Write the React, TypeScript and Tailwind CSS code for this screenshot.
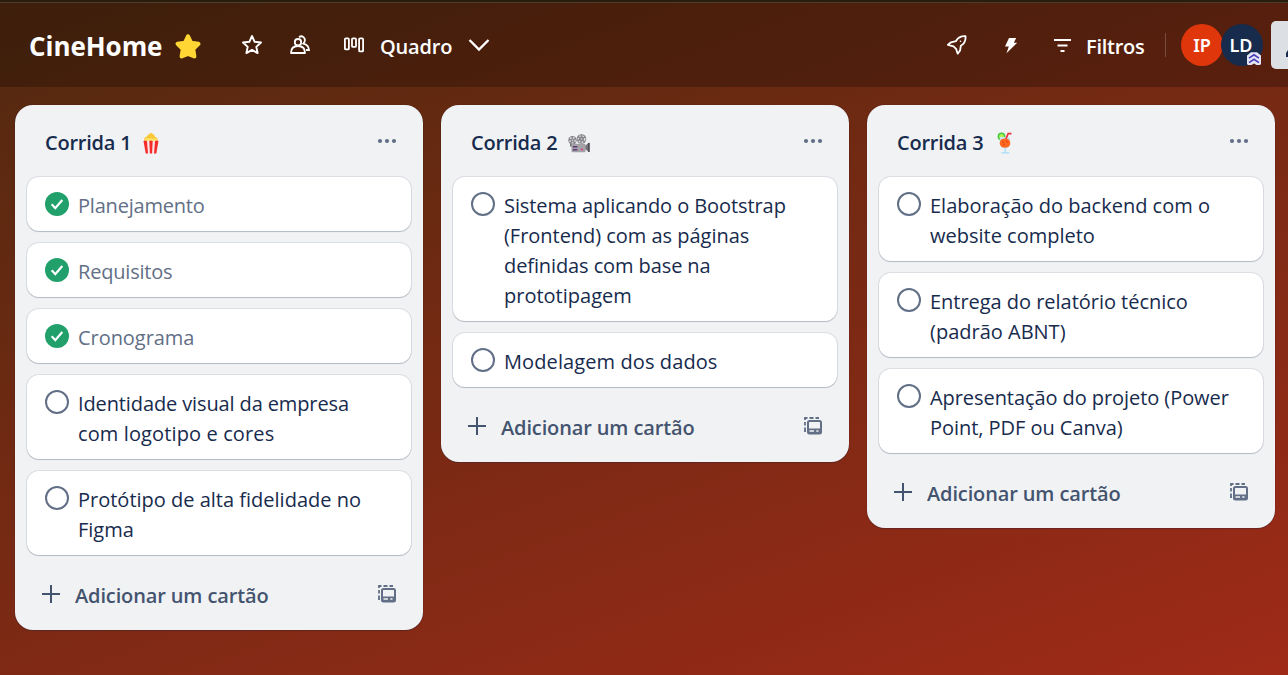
import type { ReactNode } from "react";

type Line = { text: string; tracking?: string };
type Card = { lines: Line[]; done?: boolean };
type List = { title: string; emoji: ReactNode; cards: Card[] };

const Popcorn = () => (
  <svg className="-ml-[5px]" width="16" height="22" viewBox="0 0 16 22">
    <path d="M1 8.500C.7 6.500 2 5.200 3.300 5 4 3 5.500 3 6 2.200 7 .8 8.800.5 9.800 2c1.400.3 1.900 1.500 2.200 2.800 2 .5 3.100 2 2.700 3.700L8 9.800z" fill="#fbc83a" />
    <path d="M1.200 8.700c0-2 1.500-2.500 2.500-2 .8-1 2.500-1 3.300 0 .8-.8 2.200-.7 2.900.1 1.200-1 4.600-.6 4.800 1.900L13.500 10h-11z" fill="#ffe36b" />
    <path d="M.6 9h14.800l-1.800 12.500H2.600z" fill="#fbe9ec" />
    <path d="M.5 9Q2 7.800 4 9l1 12.500H2.700zM6.300 9q1.700-1.200 3.400 0l-.6 12.500H6.900zM12 9q2-1.200 3.500 0l-2.200 12.500H11z" fill="#f42d2b" />
  </svg>
);

const Reel = ({ cx, cy, r }: { cx: number; cy: number; r: number }) => (
  <g transform={`translate(${cx} ${cy})`}>
    <circle r={r} fill="#85858a" />
    <circle r={r - 1.6} fill="none" stroke="#e0e0e0" strokeWidth="1.500" strokeDasharray="1.600 1.500" />
    <circle r=".8" fill="#ddd" />
  </g>
);

const Projector = () => (
  <svg className="mt-px" width="22" height="19" viewBox="0 0 22 19">
    <path d="M2 10h6v2.500H2zM17 12l3.500-3.200h.9v9h-.9L17 15z" fill="#777" />
    <Reel cx={4.5} cy={6.2} r={4.2} />
    <Reel cx={13.5} cy={5} r={4.8} />
    <rect x="3.500" y="9.800" width="14" height="8.500" rx="1" fill="#a4a2a6" />
    <path d="M4.800 12h4.500v1.600H4.800zM4.800 15h4.500v1.600H4.800z" fill="#5c3b78" />
    <path d="M20 9h1.700v9H20z" fill="#504e54" />
    <circle cx="14" cy="15.500" r="1.100" fill="#dc3c86" />
  </svg>
);

const Drink = () => (
  <svg className="-mt-px" width="16" height="22" viewBox="0 0 16 22">
    <circle cx="4.500" cy="4.500" r="3.900" fill="#43c943" />
    <circle cx="4.500" cy="4.500" r="2.400" fill="#b6ef55" />
    <path d="M3 5h9.800c1.200 7.800-1.300 11.500-4.900 11.500S1.800 12.800 3 5z" fill="#c5e7fa" />
    <path d="M8.500 8l2.600-6.300h3.400" fill="none" stroke="#ef3440" strokeWidth="1.700" />
    <path d="M4 7.500c2.500-1.500 5.500-1.500 8 0 3 4.500.5 8.300-4 8.300s-7-3.800-4-8.300z" fill="#ff6a1f" />
    <path d="M5 9l2 2M9 8.500l2 2M6 13l2-1" stroke="#f3471c" strokeWidth="1.300" />
    <path d="M8.300 16.200v4M4.500 20.900h7.800" stroke="#a9dcf7" strokeWidth="1.300" fill="none" />
  </svg>
);

const lists: List[] = [
  {
    title: "Corrida 1",
    emoji: <Popcorn />,
    cards: [
      { lines: [{ text: "Planejamento", tracking: "tracking-[-0.2px]" }], done: true },
      { lines: [{ text: "Requisitos", tracking: "tracking-[-0.2px]" }], done: true },
      { lines: [{ text: "Cronograma", tracking: "tracking-[-0.05px]" }], done: true },
      {
        lines: [
          { text: "Identidade visual da empresa", tracking: "tracking-[-0.12px]" },
          { text: "com logotipo e cores", tracking: "tracking-[0.12px]" },
        ],
      },
      { lines: [{ text: "Protótipo de alta fidelidade no" }, { text: "Figma" }] },
    ],
  },
  {
    title: "Corrida 2",
    emoji: <Projector />,
    cards: [
      {
        lines: [
          { text: "Sistema aplicando o Bootstrap", tracking: "tracking-[-0.08px]" },
          { text: "(Frontend) com as páginas", tracking: "tracking-[-0.03px]" },
          { text: "definidas com base na", tracking: "tracking-[-0.1px]" },
          { text: "prototipagem" },
        ],
      },
      { lines: [{ text: "Modelagem dos dados", tracking: "tracking-[0.1px]" }] },
    ],
  },
  {
    title: "Corrida 3",
    emoji: <Drink />,
    cards: [
      { lines: [{ text: "Elaboração do backend com o" }, { text: "website completo" }] },
      { lines: [{ text: "Entrega do relatório técnico", tracking: "tracking-[-0.03px]" }, { text: "(padrão ABNT)" }] },
      {
        lines: [
          { text: "Apresentação do projeto (Power", tracking: "tracking-[-0.07px]" },
          { text: "Point, PDF ou Canva)", tracking: "tracking-[-0.04px]" },
        ],
      },
    ],
  },
];

function Check({ done }: { done?: boolean }) {
  return (
    <svg className="shrink-0" width="24" height="24" viewBox="0 0 24 24" fill="none">
      {done ? (
        <>
          <circle cx="12" cy="12" r="12" fill="#22a06b" />
          <path d="M6.700 12.300l3.600 3.900 7-8.200" stroke="#fff" strokeWidth="2.200" />
        </>
      ) : (
        <circle cx="12" cy="12" r="11" stroke="#626f86" strokeWidth="2" />
      )}
    </svg>
  );
}

function ListView({ list }: { list: List }) {
  return (
    <section className="w-[408px] shrink-0 rounded-[18px] bg-[#f1f2f4] px-3 pb-[9px] shadow-[0_1px_1px_#091e4240,0_0_1px_#091e424f]">
      <header className="flex h-[72px] items-center pr-[14px] pl-[18px]">
        <h2 className="w-[86px] pt-[3px] text-[20px] leading-[30px] font-semibold tracking-[-0.22px] whitespace-nowrap text-[#172b4d]">
          {list.title}
        </h2>
        <span className="ml-[11px] flex w-[22px] justify-center pt-1">{list.emoji}</span>
        <svg className="ml-auto" width="20" height="6" viewBox="0 0 20 6" fill="#626f86">
          <circle cx="3" cy="3" r="2.100" />
          <circle cx="10" cy="3" r="2.100" />
          <circle cx="17" cy="3" r="2.100" />
        </svg>
      </header>
      <ul className="flex flex-col gap-3">
        {list.cards.map((card) => (
          <li
            key={card.lines[0].text}
            className="flex rounded-xl bg-white py-3 pl-[18px] shadow-[0_1px_1px_#091e4230,0_0_0_1px_#091e4218]"
          >
            <span className="pt-[3px]">
              <Check done={card.done} />
            </span>
            <p
              className={
                card.done
                  ? "-mb-[2px] pt-[2px] pl-[9px] text-[20px] leading-[30px] text-[#626f86]"
                  : "-mb-[2px] pt-[2px] pl-[9px] text-[20px] leading-[30px] text-[#172b4d]"
              }
            >
              {card.lines.map((line) => (
                <span key={line.text} className={`block whitespace-nowrap ${line.tracking ?? ""}`}>
                  {line.text}
                </span>
              ))}
            </p>
          </li>
        ))}
      </ul>
      <footer className="mt-3 flex h-[54px] items-center pr-[15px] pl-[15px] text-[#44546f]">
        <svg width="18" height="18" viewBox="0 0 18 18" stroke="currentColor" strokeWidth="2">
          <path d="M9 0v18M0 9h18" />
        </svg>
        <span className="ml-[15px] pt-[3px] text-[20px] leading-[30px] font-semibold tracking-[-0.13px]">Adicionar um cartão</span>
        <svg className="ml-auto" width="18" height="18" viewBox="0 0 18 18" fill="none" stroke="#626f86" strokeWidth="2">
          <path d="M1 3V1h2.500M5.500 1h4M11.500 1h3.500M1 5v3.500M1 10.500v3.500h1" strokeWidth="1.800" />
          <rect x="4" y="4" width="13" height="12.500" rx="1.500" />
          <path d="M4 11.500h13v5H4z" fill="#626f86" stroke="none" />
          <path d="M5.500 14h4.500M12.300 14h2.200" stroke="#f1f2f4" strokeWidth="1.600" />
        </svg>
      </footer>
    </section>
  );
}

const STAR = "M12 2.200l2.900 6.300 6.900.8-5.100 4.700 1.400 6.800L12 17.400l-6.100 3.400 1.400-6.800-5.100-4.700 6.900-.8z";

export default function App() {
  return (
    <div className="flex h-[675px] w-[1288px] flex-col overflow-hidden font-['Open_Sans','Noto_Sans',sans-serif]">
      <div className="h-[3px] shrink-0 border-b border-[#4a3c2e] bg-[#2b1d0c]" />
      <div className="flex min-h-0 flex-1 flex-col bg-[linear-gradient(160deg,#51290f,#9f2a18)]">
        <header className="flex h-[84px] shrink-0 items-center bg-[#0000003d] pl-[29px] text-white">
          <h1 className="w-[133px] pt-[2px] text-[26px] leading-9 font-bold tracking-[-0.05px]">CineHome</h1>
          <svg className="mt-[3px] ml-[12px]" width="28" height="28" viewBox="0 0 24 24" fill="#ffd633" stroke="#ffd633" strokeWidth="3.600" strokeLinejoin="round">
            <path d="M12 3l2.600 5.400 6.300.9-4.500 4.500 1 6.200L12 17.800l-5.400 2.200 1-6.200L3.100 9.300l6.300-.9z" />
          </svg>
          <svg className="ml-[39px]" width="22" height="22" viewBox="0 0 24 24" fill="none" stroke="#fff" strokeWidth="2.100" strokeLinejoin="round">
            <path d={STAR} />
          </svg>
          <svg className="ml-[27px]" width="20" height="20" viewBox="0 0 20 20" fill="none" stroke="#fff" strokeWidth="1.800">
            <circle cx="8" cy="7.200" r="3.200" />
            <path d="M1 18c0-4.500 2.500-7 7-7s7 2.500 7 7z" strokeLinejoin="round" />
            <path d="M9 2.300c3-2.500 7 .5 5.500 4.500-.3.800-.6 1.300-1.200 1.800 3.800 1 5.500 3 5.700 6.400h-3" />
          </svg>
          <svg className="ml-[34px]" width="20" height="16" viewBox="0 0 20 16" fill="none" stroke="#fff" strokeWidth="1.800">
            <rect x=".9" y="1.400" width="4" height="11" rx="1" />
            <rect x="8" y="1.400" width="4" height="8.500" rx="1" />
            <rect x="15.100" y="1.400" width="4" height="13" rx="1" />
          </svg>
          <span className="ml-[16px] w-[72px] pt-[3px] text-[20px] leading-[30px] font-semibold tracking-[-0.2px]">Quadro</span>
          <svg className="ml-[16px]" width="22" height="14" viewBox="0 0 22 14" fill="none" stroke="#fff" strokeWidth="2.400">
            <path d="M1.500 2L11 11.500 20.500 2" />
          </svg>
          <div className="ml-auto flex items-center">
            <svg width="20" height="20" viewBox="0 0 20 20" fill="none" stroke="#fff" strokeWidth="1.800" strokeLinejoin="round">
              <path d="M18.500 1.200c-4.300-.3-7.500 1.300-9.600 5L4 7.300 1 9.800l5.500 1.500 2.600 2.600 1.600 4.800 2.400-3.200.7-4.700c3.700-2.100 5.100-5.300 4.700-9.600z" />
              <circle cx="13.500" cy="6.200" r=".8" fill="#fff" stroke="none" />
            </svg>
            <svg className="ml-[37px]" width="14" height="17" viewBox="0 0 14 17" fill="#fff">
              <path d="M5 1h7.200L9.800 5.800h3.400L2.500 16.200 4.800 9.500H1z" />
            </svg>
            <svg className="ml-[36px]" width="17" height="13" viewBox="0 0 17 13" stroke="#fff" strokeWidth="2">
              <path d="M0 1h17M3.500 6.500h10M6.500 12h4" />
            </svg>
            <span className="ml-[15px] w-[59px] pt-[3px] text-[20px] leading-[30px] font-semibold tracking-[-0.25px]">Filtros</span>
            <span className="ml-[20px] h-6 w-px bg-white/20" />
            <span className="ml-[15px] flex size-[42px] items-center justify-center rounded-full bg-[#e0360c] font-['Noto_Sans'] text-[18px] font-semibold">
              IP
            </span>
            <span className="relative -ml-[2px] flex size-[42px] items-center justify-center rounded-full bg-[#172b4d] pr-[2px] font-['Noto_Sans'] text-[18px] font-semibold">
              LD
              <svg className="absolute right-[2px] bottom-[1px]" width="14" height="13" viewBox="0 0 14 13">
                <path d="M0 3.500L4 .3h6l4 3.200V12l-1 1H9.500L7 11.500 4.500 13H1l-1-1z" fill="#e4e6f5" />
                <path d="M2 6.200l5-3.400 5 3.400M2 10.700l5-3.400 5 3.400" fill="none" stroke="#4b3fb5" strokeWidth="1.600" />
              </svg>
            </span>
            <span className="ml-[8px] flex h-12 w-[17px] items-center justify-end rounded-l-[5px] bg-[#dcdfe4]">
              <svg className="mt-4" width="2" height="8" viewBox="0 0 2 8" fill="#172b4d">
                <path d="M0 8V4l2-3v7z" />
              </svg>
            </span>
          </div>
        </header>
        <main className="flex items-start gap-[18px] pt-[18px] pl-[15px]">
          {lists.map((list) => (
            <ListView key={list.title} list={list} />
          ))}
        </main>
      </div>
    </div>
  );
}
